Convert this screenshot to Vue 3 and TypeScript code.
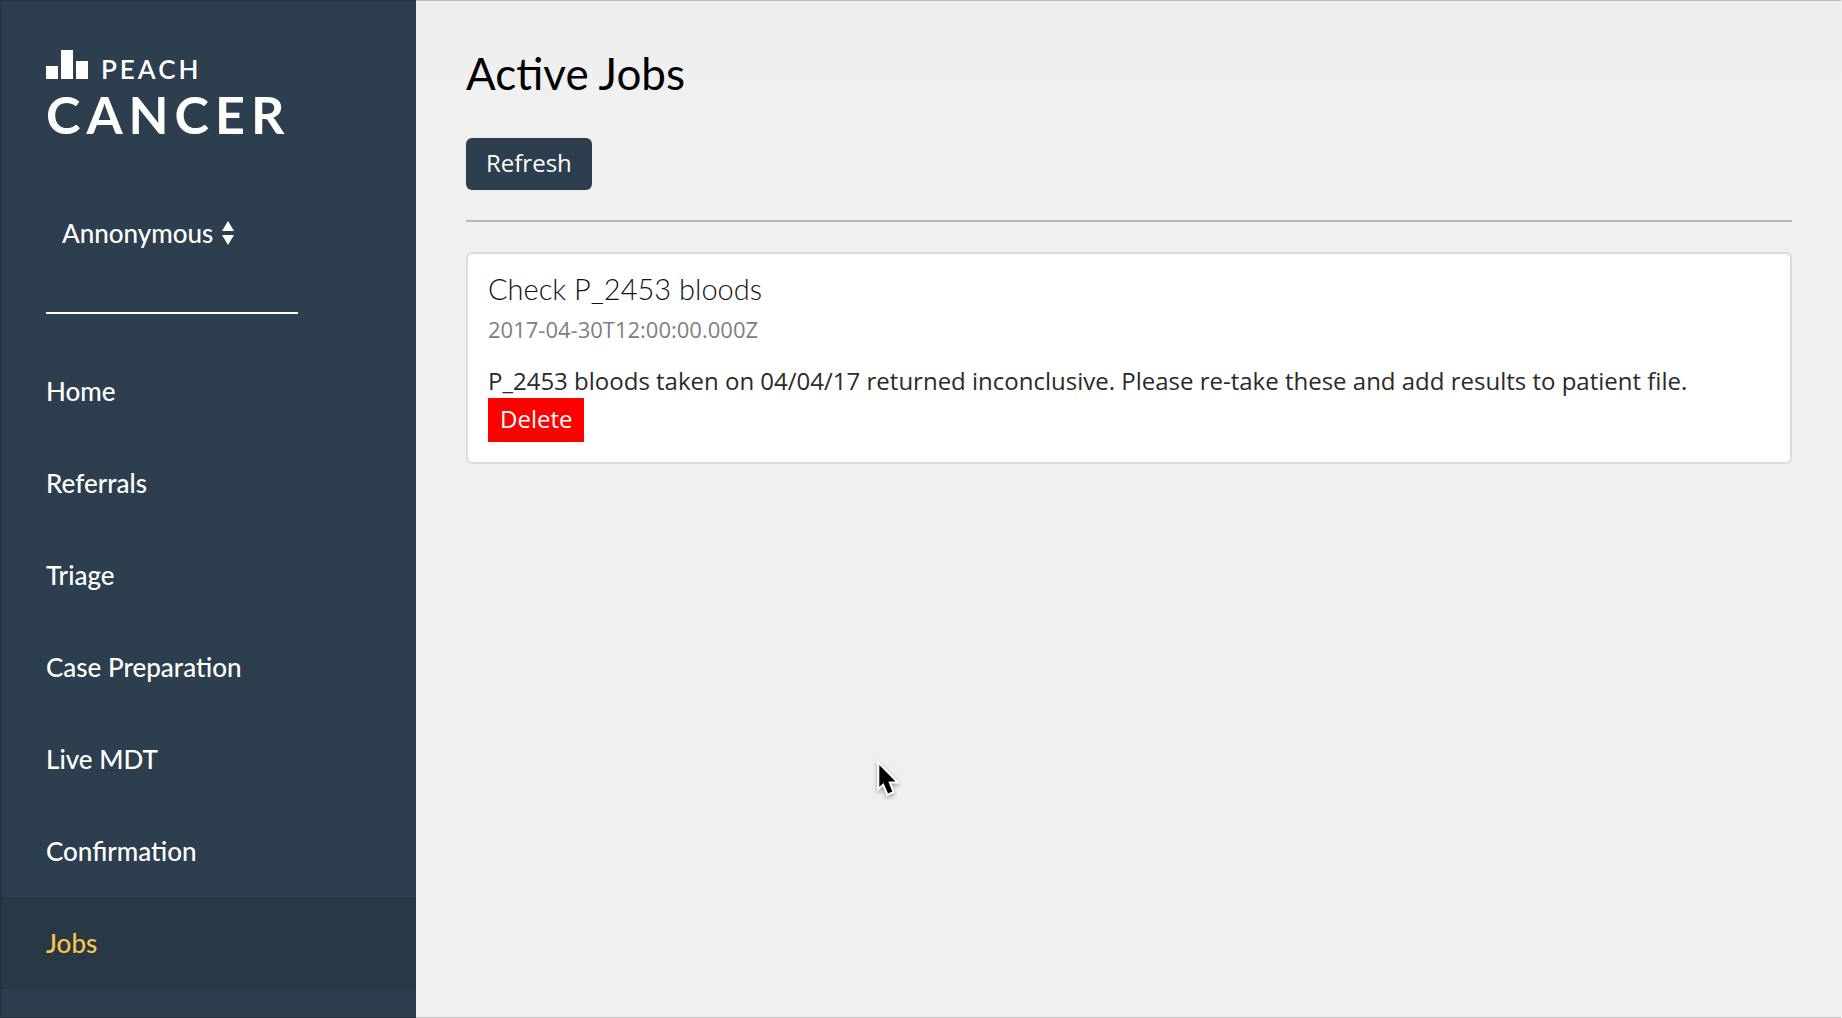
<script setup lang="ts">
import { ref } from 'vue'

interface Job {
  id: number
  title: string
  due: string
  description: string
}

const sections: string[] = [
  'Home',
  'Referrals',
  'Triage',
  'Case Preparation',
  'Live MDT',
  'Confirmation',
  'Jobs',
]
const current = ref('Jobs')
const user = ref('Annonymous')

const loadJobs = (): Job[] => [
  {
    id: 1,
    title: 'Check P_2453 bloods',
    due: '2017-04-30T12:00:00.000Z',
    description:
      'P_2453 bloods taken on 04/04/17 returned inconclusive. Please re-take these and add results to patient file.',
  },
]

const jobs = ref<Job[]>(loadJobs())

function refresh() {
  jobs.value = loadJobs()
}

function remove(id: number) {
  jobs.value = jobs.value.filter((job) => job.id !== id)
}
</script>

<template>
  <div class="shell">
    <aside class="sidebar">
      <div class="brand">
        <div class="brand-top">
          <svg class="brand-bars" viewBox="0 0 42 29" width="42" height="29" aria-hidden="true">
            <path d="M0 16h12v13H0zM15 0h12v29H15zM30 11h12v18H30z" fill="#fff" />
          </svg>
          <span class="brand-peach">PEACH</span>
        </div>
        <div class="brand-cancer">CANCER</div>
      </div>

      <div class="user">
        <select v-model="user" class="user-select" aria-label="User">
          <option>Annonymous</option>
        </select>
        <svg class="user-arrows" viewBox="0 0 12 24" width="12" height="24" aria-hidden="true">
          <path d="M6 0l6 10H0zM0 14h12L6 24z" fill="#fff" />
        </svg>
      </div>

      <hr class="sidebar-rule" />

      <nav class="nav">
        <a
          v-for="section in sections"
          :key="section"
          href="#"
          class="nav-link"
          :class="{ active: section === current }"
          @click.prevent="current = section"
          >{{ section }}</a
        >
      </nav>
    </aside>

    <main class="content">
      <h1 class="title">Active Jobs</h1>
      <button type="button" class="refresh" @click="refresh">Refresh</button>
      <hr class="rule" />
      <article v-for="job in jobs" :key="job.id" class="card">
        <h2 class="card-title">{{ job.title }}</h2>
        <p class="card-date">{{ job.due }}</p>
        <p class="card-text">{{ job.description }}</p>
        <button type="button" class="delete" @click="remove(job.id)">Delete</button>
      </article>
    </main>

    <svg class="pointer" viewBox="0 0 26 40" width="26" height="40" aria-hidden="true">
      <path
        d="M3.3 5V27L7.5 23L12 33.5L16.3 31.5L12.3 21.5H19.5Z"
        fill="#000"
        stroke="#fff"
        stroke-width="4"
        paint-order="stroke"
      />
    </svg>
  </div>
</template>

<style>
body {
  margin: 0;
  background: #f0f0f0;
}
</style>

<style scoped>
.shell {
  box-sizing: border-box;
  display: flex;
  min-height: 100vh;
  position: relative;
  font-family: 'Open Sans', 'Noto Sans', sans-serif;
  font-size: 24px;
  color: #2a2a2a;
  background: linear-gradient(#ededed, #f0f0f0 80px);
}

/* Thin window edge on the top, left and bottom sides */
.shell::after {
  content: '';
  position: absolute;
  inset: 0;
  pointer-events: none;
  box-shadow: inset 0 0 0 1px rgba(0, 0, 0, 0.2);
  clip-path: inset(0 1px 0 0);
}

.sidebar {
  flex: 0 0 416px;
  background: #2d3e4f;
  color: #fff;
  font-family: Lato, sans-serif;
}

.brand {
  padding: 50px 46px 0;
}

.brand-top {
  display: flex;
  align-items: flex-end;
  gap: 13px;
  height: 29px;
}

.brand-bars {
  display: block;
}

.brand-peach {
  font-size: 26px;
  font-weight: 600;
  line-height: 20px;
  letter-spacing: 3px;
}

.brand-cancer {
  margin-top: 9px;
  font-size: 52px;
  font-weight: 700;
  line-height: 52px;
  letter-spacing: 6px;
}

.user {
  display: flex;
  align-items: center;
  gap: 8px;
  padding: 0 62px;
  margin-top: 73px;
  height: 40px;
}

.user-select {
  appearance: none;
  margin: 0;
  padding: 0;
  border: 0;
  background: none;
  color: inherit;
  font: 500 26px/40px Lato, sans-serif;
}

.sidebar-rule {
  width: 252px;
  height: 2px;
  margin: 59px 0 31px 46px;
  border: 0;
  background: #fff;
}

.nav-link {
  display: block;
  padding: 0 46px;
  font-size: 26px;
  font-weight: 500;
  line-height: 92px;
  color: #fff;
  text-decoration: none;
}

.nav-link.active {
  background: #283845;
  color: #fbc54c;
}

.content {
  flex: 1;
  min-width: 0;
  padding: 44px 50px;
}

.title {
  margin: 0 0 36px;
  font: 400 44px/58px Lato, sans-serif;
  color: #000;
}

.refresh {
  display: block;
  padding: 0 20px 2px;
  border: 0;
  border-radius: 6px;
  background: #2d3e4f;
  color: #fff;
  font: 500 24px/50px 'Open Sans', 'Noto Sans', sans-serif;
}

.rule {
  height: 2px;
  margin: 30px 0;
  border: 0;
  background: #b8b8b8;
}

.card {
  padding: 18px 20px 20px;
  border: 2px solid #dcdcdc;
  border-radius: 6px;
  background: #fff;
}

.card-title {
  margin: 0;
  font: 300 29px/34px Lato, sans-serif;
  color: #111;
}

.card-date {
  margin: 6px 0 18px;
  font-size: 22px;
  line-height: 34px;
  color: #808080;
}

.card-text {
  margin: 0;
  line-height: 34px;
}

.delete {
  display: block;
  padding: 0 12px 2px;
  border: 0;
  background: #f00;
  color: #fff;
  font: 500 24px/42px 'Open Sans', 'Noto Sans', sans-serif;
}

.pointer {
  position: absolute;
  left: 876px;
  top: 760px;
  filter: drop-shadow(0 2px 2px rgba(0, 0, 0, 0.35));
}
</style>
